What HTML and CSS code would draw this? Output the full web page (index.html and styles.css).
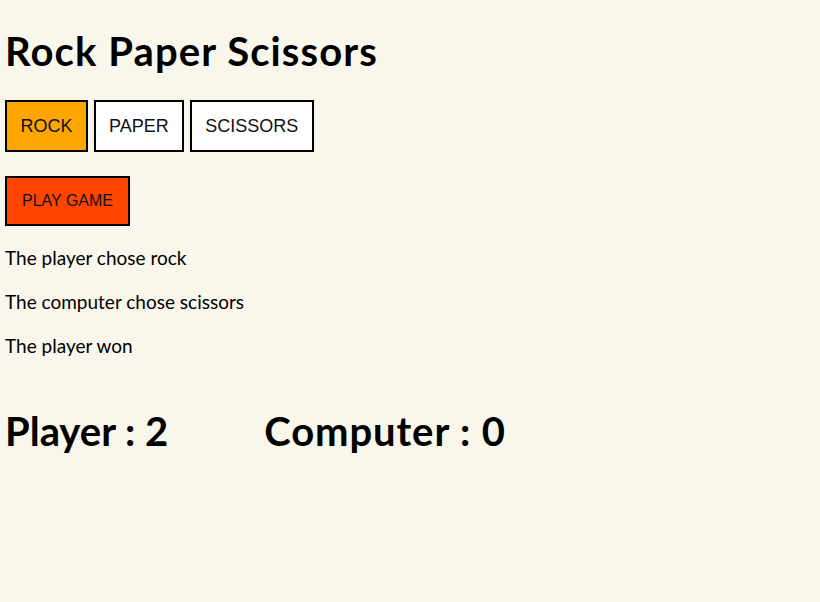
FILE: index.html
```html
<!DOCTYPE html>
<html lang="en">
<head>
<meta charset="utf-8">
<title>Rock Paper Scissors</title>
<link rel="stylesheet" href="styles.css">
</head>
<body>
  <h1 class="title">Rock Paper Scissors</h1>
  <div class="choices">
    <button class="choice selected">ROCK</button>
    <button class="choice">PAPER</button>
    <button class="choice">SCISSORS</button>
  </div>
  <button class="play">PLAY GAME</button>
  <p class="result">The player chose rock</p>
  <p class="result">The computer chose scissors</p>
  <p class="result">The player won</p>
  <div class="scores">
    <h2 class="score score-player">Player : 2</h2>
    <h2 class="score">Computer : 0</h2>
  </div>
</body>
</html>
```
FILE: styles.css
```css
html, body {
  background: #f9f6ec;
}
body {
  margin: 0;
  padding: 0 5px;
  font-family: Lato, "Open Sans", sans-serif;
  color: #000;
}
.title {
  font-size: 40px;
  font-weight: 700;
  letter-spacing: 1.1px;
  line-height: 48px;
  margin: 27px 0 25px;
}
.choices {
  display: flex;
  gap: 5.5px;
}
.choice, .play {
  font-family: "Liberation Sans", Arial, sans-serif;
  font-size: 18px;
  line-height: 21px;
  color: #111;
  border: 2px solid #000;
  border-radius: 0;
  padding: 13.5px;
  background: #fff;
  cursor: pointer;
}
.choice.selected {
  background: #ffa500;
}
.play {
  display: block;
  margin-top: 24px;
  font-size: 16px;
  line-height: 18px;
  padding: 14px 15px;
  background: #ff4500;
}
.result {
  font-size: 19px;
  line-height: 22px;
  margin: 22px 0;
}
.result:first-of-type {
  margin-top: 21px;
}
.scores {
  display: flex;
  gap: 96px;
  margin-top: 50px;
}
.score {
  font-size: 40px;
  font-weight: 700;
  line-height: 48px;
  margin: 0;
}
.score + .score {
  letter-spacing: 0.9px;
}
```
